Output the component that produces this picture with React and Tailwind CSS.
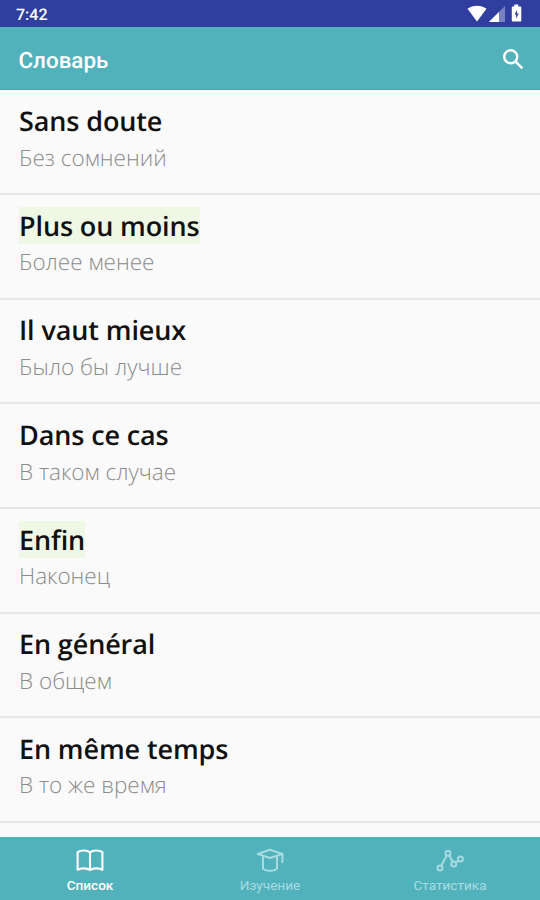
const WORDS = [
  { word: "Sans doute",     translation: "Без сомнений" },
  { word: "Plus ou moins",  translation: "Более менее", learned: true },
  { word: "Il vaut mieux",  translation: "Было бы лучше" },
  { word: "Dans ce cas",    translation: "В таком случае" },
  { word: "Enfin",          translation: "Наконец", learned: true },
  { word: "En général",     translation: "В общем" },
  { word: "En même temps",  translation: "В то же время" },
];

const TABS = [
  { label: "Список",     Icon: BookIcon, active: true },
  { label: "Изучение",   Icon: CapIcon },
  { label: "Статистика", Icon: ChartIcon },
];

function BookIcon() {
  return (
    <svg viewBox="0 0 30 26" fill="none" stroke="currentColor" strokeWidth="2.1" strokeLinejoin="round" className="w-[30px] h-[26px]">
      <path d="M15 5.4C12.5 3 6 3 2.6 5.2v17.6c3.4-2 9.6-1.8 12.4.2 2.8-2 9-2.2 12.4-.2V5.2C24 3 17.5 3 15 5.4zM15 5.4V23" />
    </svg>
  );
}

function CapIcon() {
  return (
    <svg viewBox="0 0 30 26" fill="none" stroke="currentColor" strokeWidth="2" strokeLinejoin="round" strokeLinecap="round" className="w-[30px] h-[26px]">
      <path d="M2.8 7 15 2.8 27.4 7 15 11z" />
      <path d="M8 9.2v12.4c2.6 2.8 11.4 2.8 14 0V9.2M27.4 7v8.2" />
    </svg>
  );
}

function ChartIcon() {
  return (
    <svg viewBox="0 0 30 26" fill="none" stroke="currentColor" strokeWidth="2" className="w-[30px] h-[26px]">
      <circle cx="5" cy="21" r="2.5" />
      <circle cx="13" cy="6.2" r="2.5" />
      <circle cx="18.8" cy="17" r="2.5" />
      <circle cx="25.4" cy="12" r="2.5" />
      <path d="M6.2 18.8 11.8 8.4M14.2 8.4l3.5 6.4M20.8 15.5l2.6-2" />
    </svg>
  );
}

function StatusBar() {
  return (
    <div className="h-[27px] shrink-0 bg-[#303f9f] flex items-center justify-between pl-4 pr-[18px] text-white">
      <span className="text-[16px] font-medium leading-none pt-0.5">7:42</span>
      <svg viewBox="0 0 56 20" className="w-14 h-5">
        <path d="M1.5 4.8C7 .8 15 .8 20.5 4.8L11 17.5z" fill="#fff" />
        <path d="M39 2v16H22.8z" fill="#fff" fillOpacity=".35" />
        <path d="M33 8v10H22.8z" fill="#fff" />
        <path d="M48.3.5h4v2h2q1 0 1 1v13q0 1-1 1h-7.5q-1 0-1-1v-13q0-1 1-1h1.5z" fill="#fff" />
        <path d="M51 6 48.6 10.6h1.6v4.2l2.5-5.2H51z" fill="#303f9f" />
      </svg>
    </div>
  );
}

function WordRow({ word, translation, learned }) {
  return (
    <li className="h-[104.6px] shrink-0 border-b-2 border-[#e7e7e7] pl-[19px] pt-[11.5px]">
      <div className="h-[37px] flex">
        <span className={`text-[27px] leading-[37px] tracking-[-0.12px] font-semibold text-[#111] whitespace-nowrap ${learned ? "bg-[#eff8e4]" : ""}`}>
          {word}
        </span>
      </div>
      <p className="text-[22.5px] leading-[31px] mt-[2.7px] font-light text-[#8c8c8c]">{translation}</p>
    </li>
  );
}

export default function App() {
  return (
    <div className="w-[540px] h-[900px] flex flex-col overflow-hidden bg-[#fafafa] font-['Roboto',sans-serif] [text-rendering:geometricPrecision]">
      <StatusBar />

      {/* App bar */}
      <header className="h-[63px] shrink-0 bg-[#52b2bb] border-b border-[#43acb2] flex items-center justify-between pl-[18.5px] pr-4 text-white">
        <h1 className="text-[22.4px] font-medium leading-none pt-[6px]">Словарь</h1>
        <svg viewBox="0 0 22 22" fill="none" stroke="currentColor" strokeWidth="2.4" className="w-[22px] h-[22px] mt-px">
          <circle cx="8.7" cy="8.7" r="6.5" />
          <path d="m13.4 13.4 7 7" />
        </svg>
      </header>

      {/* Word list */}
      <ul className="flex-1 min-h-0 flex flex-col overflow-hidden pt-[0.7px] font-['Open_Sans',sans-serif]">
        {WORDS.map((item) => (
          <WordRow key={item.word} {...item} />
        ))}
      </ul>

      {/* Bottom tabs */}
      <nav className="h-[63px] shrink-0 bg-[#52b2bb] grid grid-cols-3">
        {TABS.map(({ label, Icon, active }) => (
          <button
            key={label}
            className={`flex flex-col items-center pt-[10px] ${active ? "text-white" : "text-[#a6dce1]"}`}
          >
            <Icon />
            <span className={`text-[13.6px] leading-4 mt-1 ${active ? "font-medium" : ""}`}>{label}</span>
          </button>
        ))}
      </nav>
    </div>
  );
}
